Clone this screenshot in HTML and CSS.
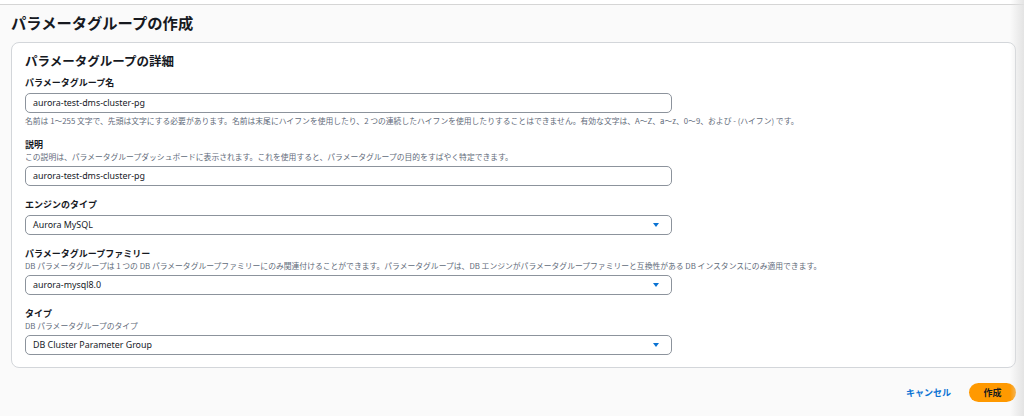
FILE: index.html
```html
<!DOCTYPE html>
<html lang="ja">
<head>
<meta charset="utf-8">
<link rel="stylesheet" href="styles.css">
</head>
<body>
<div class="topbar"></div>
<main class="page">
  <h1 class="title">パラメータグループの作成</h1>
  <section class="card">
    <h2 class="card-title">パラメータグループの詳細</h2>
    <div class="field">
      <div class="label">パラメータグループ名</div>
      <div class="input">aurora-test-dms-cluster-pg</div>
      <div class="hint after">名前は 1～255 文字で、先頭は文字にする必要があります。名前は末尾にハイフンを使用したり、2 つの連続したハイフンを使用したりすることはできません。有効な文字は、A～Z、a～z、0～9、および - (ハイフン) です。</div>
    </div>
    <div class="field">
      <div class="label">説明</div>
      <div class="hint">この説明は、パラメータグループダッシュボードに表示されます。これを使用すると、パラメータグループの目的をすばやく特定できます。</div>
      <div class="input">aurora-test-dms-cluster-pg</div>
    </div>
    <div class="field">
      <div class="label">エンジンのタイプ</div>
      <div class="input select">Aurora MySQL<span class="caret"></span></div>
    </div>
    <div class="field">
      <div class="label">パラメータグループファミリー</div>
      <div class="hint">DB パラメータグループは 1 つの DB パラメータグループファミリーにのみ関連付けることができます。パラメータグループは、DB エンジンがパラメータグループファミリーと互換性がある DB インスタンスにのみ適用できます。</div>
      <div class="input select">aurora-mysql8.0<span class="caret"></span></div>
    </div>
    <div class="field">
      <div class="label">タイプ</div>
      <div class="hint">DB パラメータグループのタイプ</div>
      <div class="input select">DB Cluster Parameter Group<span class="caret"></span></div>
    </div>
  </section>
  <div class="actions">
    <span class="link-btn">キャンセル</span>
    <span class="primary-btn">作成</span>
  </div>
</main>
</body>
</html>
```

FILE: styles.css
```css
* { box-sizing: border-box; }
html, body {
  margin: 0;
  padding: 0;
}
body {
  background: #fafafa;
  font-family: "Noto Sans", "Noto Sans CJK JP", sans-serif;
  color: #16191f;
  width: 1024px;
  height: 416px;
  overflow: hidden;
  position: relative;
}
body::after {
  content: "";
  position: absolute;
  top: 0;
  right: 0;
  width: 14px;
  height: 416px;
  background: linear-gradient(to right, rgba(230,230,230,0), rgba(225,225,225,0.9));
  pointer-events: none;
}
.topbar {
  height: 5px;
  background: #ffffff;
  border-bottom: 1px solid #d5d5d5;
}
.page {
  padding: 7px 8px 0 11px;
}
.title {
  margin: 0;
  font-size: 15.3px;
  line-height: 20px;
  font-weight: 700;
  font-family: "Noto Sans CJK JP", sans-serif;
}
.card {
  margin-top: 10px;
  width: 1005px;
  background: #ffffff;
  border: 1px solid #d3d6da;
  border-radius: 8px;
  padding: 10px 13px 12px 13px;
}
.card-title {
  margin: 0 0 8px 0;
  font-size: 12.5px;
  line-height: 16px;
  font-weight: 700;
  font-family: "Noto Sans CJK JP", sans-serif;
}
.field + .field {
  margin-top: 13px;
}
.label {
  font-size: 9px;
  line-height: 12px;
  font-weight: 700;
  font-family: "Noto Sans CJK JP", sans-serif;
}
.hint {
  font-size: 7.8px;
  line-height: 11px;
  color: #5f6b7a;
  font-family: "Noto Sans CJK JP", sans-serif;
  white-space: nowrap;
}
.hint.after {
  margin-top: 2px;
}
.input {
  margin-top: 4px;
  width: 647px;
  height: 20px;
  border: 1px solid #8c939c;
  border-radius: 5px;
  background: #ffffff;
  padding: 0 7px;
  font-size: 8.9px;
  line-height: 18px;
  display: flex;
  align-items: center;
  justify-content: space-between;
}
.caret {
  width: 0;
  height: 0;
  border-left: 3.5px solid transparent;
  border-right: 3.5px solid transparent;
  border-top: 4.5px solid #0972d3;
  margin-right: 5px;
}
.actions {
  margin-top: 15px;
  width: 1005px;
  display: flex;
  justify-content: flex-end;
  align-items: center;
  gap: 18px;
}
.link-btn {
  color: #0972d3;
  font-size: 9px;
  font-weight: 700;
  font-family: "Noto Sans CJK JP", sans-serif;
}
.primary-btn {
  width: 47px;
  height: 19px;
  border-radius: 10px;
  background: #ff9900;
  color: #16191f;
  font-size: 9px;
  font-weight: 700;
  font-family: "Noto Sans CJK JP", sans-serif;
  display: flex;
  align-items: center;
  justify-content: center;
}
```
